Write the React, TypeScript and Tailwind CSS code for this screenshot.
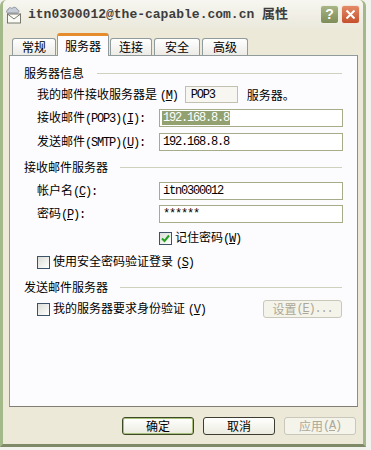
import React from "react";

const A = ({ children }: { children: React.ReactNode }) => (
  <span className="font-['Liberation_Mono',monospace] text-[12px] tracking-[-1.2px]">
    {children}
  </span>
);

const Key = ({ k }: { k: string }) => (
  <A>
    (<span className="underline underline-offset-1">{k}</span>)
  </A>
);

const Header = ({ title, gap }: { title: string; gap: string }) => (
  <div className="flex items-center pl-[14px] pr-[15px]">
    <span>{title}</span>
    <div className={`flex-1 h-px bg-[#d0d0bf] ${gap}`} />
  </div>
);

const Field = ({ value, selected }: { value: string; selected?: boolean }) => (
  <div className="w-[184px] h-[18px] border border-[#a5ac8a] bg-white flex items-center pl-[2px]">
    <span
      className={`font-['Liberation_Mono',monospace] text-[12px] tracking-[-1.2px] leading-[14px] px-px ${
        selected ? "bg-[#93a070] text-white" : "text-black"
      }`}
    >
      {value}
    </span>
  </div>
);

const Check = ({ checked }: { checked?: boolean }) => (
  <div className="w-[13px] h-[13px] border border-[#3d5266] bg-gradient-to-br from-[#dcdcd7] to-white flex items-center justify-center">
    {checked && (
      <svg width="9" height="9" viewBox="0 0 9 9">
        <path d="M1 4.5 L3.5 7 L8 1.5" stroke="#21a121" strokeWidth="2" fill="none" />
      </svg>
    )}
  </div>
);

const MailIcon = () => (
  <svg width="17" height="18" viewBox="0 0 17 18">
    <path
      d="M3 7 C1 7 1 4 3 4 C3 1.5 6 1 7 2.5 C8 0.5 12 1 12 3.5 C14.5 3.5 14.5 7 12 7 Z"
      fill="#c7cdd6"
      stroke="#7d8794"
      strokeWidth="0.8"
    />
    <rect x="2.5" y="8" width="13" height="9" fill="#fbfbf6" stroke="#6b6b60" strokeWidth="0.9" />
    <path d="M2.5 8 L9 13 L15.5 8" fill="none" stroke="#6b6b60" strokeWidth="0.9" />
  </svg>
);

const tabs = [
  { label: "常规", w: "w-[44px]", ml: "ml-0" },
  { label: "服务器", w: "w-[52px]", ml: "ml-[1px]", active: true },
  { label: "连接", w: "w-[42px]", ml: "ml-[1px]" },
  { label: "安全", w: "w-[46px]", ml: "ml-[2px]" },
  { label: "高级", w: "w-[46px]", ml: "ml-[2px]" },
];

export default function App() {
  return (
    <div className="w-[371px] h-[450px] bg-[#f2f2ee] font-['Noto_Sans_CJK_SC',sans-serif] text-[12px] text-black">
      <div className="w-[366px] h-[447px] bg-[#ece9d8] border-l-[3px] border-r-[3px] border-b-[3px] border-[#a4b98a] border-b-[#7f8a68] rounded-t-[6px] flex flex-col">
        {/* title bar */}
        <div className="h-[29px] flex items-center pl-[2px] bg-gradient-to-b from-[#f7f6f0] to-[#ebe9dc] rounded-t-[5px]">
          <MailIcon />
          <span className="ml-[6px] font-['Liberation_Mono','Noto_Sans_CJK_SC',monospace] font-bold text-[13px] text-[#3d3d3d]">
            itn0300012@the-capable.com.cn 属性
          </span>
          <div className="ml-auto mr-[3px] flex gap-[2px]">
            <div className="w-[19px] h-[19px] rounded-[3px] border border-[#eef0e4] bg-gradient-to-b from-[#a8b685] to-[#7d8c58] flex items-center justify-center text-white font-bold text-[14px] font-['Liberation_Sans',sans-serif]">
              ?
            </div>
            <div className="w-[19px] h-[19px] rounded-[3px] border border-[#f3e4dc] bg-gradient-to-b from-[#e48a67] to-[#c4502c] flex items-center justify-center">
              <svg width="11" height="11" viewBox="0 0 11 11">
                <path d="M1.5 1.5 L9.5 9.5 M9.5 1.5 L1.5 9.5" stroke="white" strokeWidth="2" />
              </svg>
            </div>
          </div>
        </div>

        {/* tabs */}
        <div className="mt-[4px] h-[22px] pl-[9px] flex items-end relative z-10">
          {tabs.map((t) =>
            t.active ? (
              <div
                key={t.label}
                className={`${t.w} ${t.ml} h-[23px] -mb-px bg-[#fcfcfe] border border-b-0 border-[#919b9c] border-t-[3px] border-t-[#e68b2c] rounded-t-[3px] flex justify-center pt-[1px]`}
              >
                {t.label}
              </div>
            ) : (
              <div
                key={t.label}
                className={`${t.w} ${t.ml} h-[17px] bg-gradient-to-b from-white to-[#ecebe6] border border-b-0 border-[#919b9c] rounded-t-[3px] flex justify-center items-center`}
              >
                {t.label}
              </div>
            )
          )}
        </div>

        {/* panel */}
        <div className="ml-[6px] w-[349px] h-[352px] bg-[#fcfcfe] border border-[#919b9c] border-r-[#8e8e88] border-b-[#7f7f78] flex flex-col pt-[7px]">
          <div className="h-[20px] flex flex-col justify-center">
            <Header title="服务器信息" gap="ml-[13px]" />
          </div>
          <div className="h-[23px] flex items-center pl-[27px]">
            <span>
              我的邮件接收服务器是 <Key k="M" />
            </span>
            <div className="ml-[7px] w-[53px] h-[17px] border border-[#c2c0b0] bg-[#f7f6f1] flex items-center pl-[5px]">
              <A>POP3</A>
            </div>
            <span className="ml-[9px]">服务器。</span>
          </div>
          <div className="h-[24px] flex items-center pl-[27px]">
            <span className="w-[122px]">
              接收邮件<A>(POP3)</A>
              <Key k="I" />
              <A>:</A>
            </span>
            <Field value="192.168.8.8" selected />
          </div>
          <div className="h-[24px] flex items-center pl-[27px]">
            <span className="w-[122px]">
              发送邮件<A>(SMTP)</A>
              <Key k="U" />
              <A>:</A>
            </span>
            <Field value="192.168.8.8" />
          </div>
          <div className="h-[26px] flex flex-col justify-center">
            <Header title="接收邮件服务器" gap="ml-[12px]" />
          </div>
          <div className="h-[22px] flex items-center pl-[27px]">
            <span className="w-[122px]">
              帐户名<Key k="C" />
              <A>:</A>
            </span>
            <Field value="itn0300012" />
          </div>
          <div className="h-[24px] flex items-center pl-[27px]">
            <span className="w-[122px]">
              密码<Key k="P" />
              <A>:</A>
            </span>
            <Field value="******" />
          </div>
          <div className="h-[24px] flex items-center pl-[149px] gap-[3px]">
            <Check checked />
            <span>
              记住密码<Key k="W" />
            </span>
          </div>
          <div className="h-[24px] flex items-center pl-[27px] gap-[3px]">
            <Check />
            <span>
              使用安全密码验证登录 <Key k="S" />
            </span>
          </div>
          <div className="h-[26px] flex flex-col justify-center">
            <Header title="发送邮件服务器" gap="ml-[12px]" />
          </div>
          <div className="h-[18px] flex items-center pl-[27px] pr-[15px]">
            <Check />
            <span className="ml-[3px]">
              我的服务器要求身份验证 <Key k="V" />
            </span>
            <div className="ml-auto w-[79px] h-[18px] border border-[#c9c7ba] rounded-[3px] bg-[#f5f4ea] text-[#aca899] flex items-center justify-center">
              设置<Key k="E" />
              <A>...</A>
            </div>
          </div>
        </div>

        {/* buttons */}
        <div className="mt-[10px] h-[18px] flex justify-end gap-[9px] pr-[7px]">
          <div className="w-[72px] h-[18px] rounded-[3px] border border-[#3d4a26] shadow-[inset_0_0_0_1px_#a9c07c] bg-gradient-to-b from-white to-[#ecebe0] flex items-center justify-center">
            确定
          </div>
          <div className="w-[72px] h-[18px] rounded-[3px] border border-[#3c3c30] bg-gradient-to-b from-white to-[#ecebe0] flex items-center justify-center">
            取消
          </div>
          <div className="w-[72px] h-[18px] rounded-[3px] border border-[#c9c7ba] bg-[#f5f4ea] text-[#aca899] flex items-center justify-center">
            应用<Key k="A" />
          </div>
        </div>
      </div>
    </div>
  );
}
